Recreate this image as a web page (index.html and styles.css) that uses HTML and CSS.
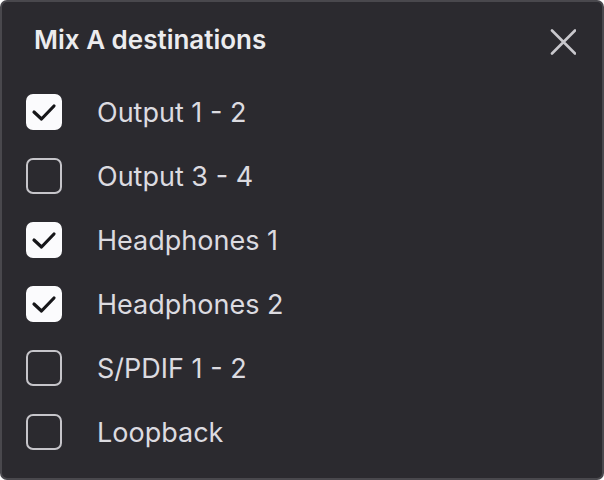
FILE: index.html
```html
<!DOCTYPE html>
<html>
<head>
<meta charset="utf-8">
<link rel="stylesheet" href="styles.css">
</head>
<body>
<div class="panel">
  <div class="header">
    <h1 class="title">Mix A destinations</h1>
    <button class="close" aria-label="Close">
      <svg width="26" height="26" viewBox="0 0 26 26"><path d="M2 1.5 L25 24.5 M25 1.5 L2 24.5" stroke="#c9c8cd" stroke-width="2.6" stroke-linecap="round" fill="none"/></svg>
    </button>
  </div>
  <ul class="list">
    <li class="row"><span class="box checked"><svg width="36" height="36" viewBox="0 0 36 36"><path d="M8 18 L15.5 25 L28 12" stroke="#161619" stroke-width="3.2" stroke-linecap="round" stroke-linejoin="round" fill="none"/></svg></span><span class="label">Output 1 - 2</span></li>
    <li class="row"><span class="box"></span><span class="label">Output 3 - 4</span></li>
    <li class="row"><span class="box checked"><svg width="36" height="36" viewBox="0 0 36 36"><path d="M8 18 L15.5 25 L28 12" stroke="#161619" stroke-width="3.2" stroke-linecap="round" stroke-linejoin="round" fill="none"/></svg></span><span class="label">Headphones 1</span></li>
    <li class="row"><span class="box checked"><svg width="36" height="36" viewBox="0 0 36 36"><path d="M8 18 L15.5 25 L28 12" stroke="#161619" stroke-width="3.2" stroke-linecap="round" stroke-linejoin="round" fill="none"/></svg></span><span class="label">Headphones 2</span></li>
    <li class="row"><span class="box"></span><span class="label">S/PDIF 1 - 2</span></li>
    <li class="row"><span class="box"></span><span class="label">Loopback</span></li>
  </ul>
</div>
</body>
</html>
```

FILE: styles.css
```css
html, body {
  margin: 0;
  padding: 0;
  background: #ffffff;
}
body {
  font-family: Inter, "Noto Sans", sans-serif;
}
.panel {
  box-sizing: border-box;
  width: 604px;
  height: 480px;
  background: #2b2a2f;
  border: 2px solid #49484d;
  border-radius: 7px;
  overflow: hidden;
}
.header {
  height: 75px;
  display: flex;
  align-items: center;
  justify-content: space-between;
  padding: 0 26px 0 32px;
}
.title {
  margin: 0;
  font-size: 26px;
  font-weight: 600;
  color: #ececee;
  letter-spacing: 0;
}
.close {
  background: none;
  border: 0;
  padding: 0;
  width: 26px;
  height: 26px;
  display: flex;
  margin-top: 4px;
}
.list {
  list-style: none;
  margin: 0;
  padding: 3px 0 0 24px;
}
.row {
  height: 64px;
  display: flex;
  align-items: center;
  gap: 35px;
}
.box {
  box-sizing: border-box;
  width: 36px;
  height: 36px;
  border: 2.5px solid #c6c5ca;
  border-radius: 7px;
  display: flex;
  align-items: center;
  justify-content: center;
  flex: none;
}
.box.checked {
  background: #fbfbfd;
  border-color: #fbfbfd;
}
.box svg {
  flex: none;
}
.label {
  font-size: 27px;
  color: #dcdbe0;
  letter-spacing: 0;
}
```
